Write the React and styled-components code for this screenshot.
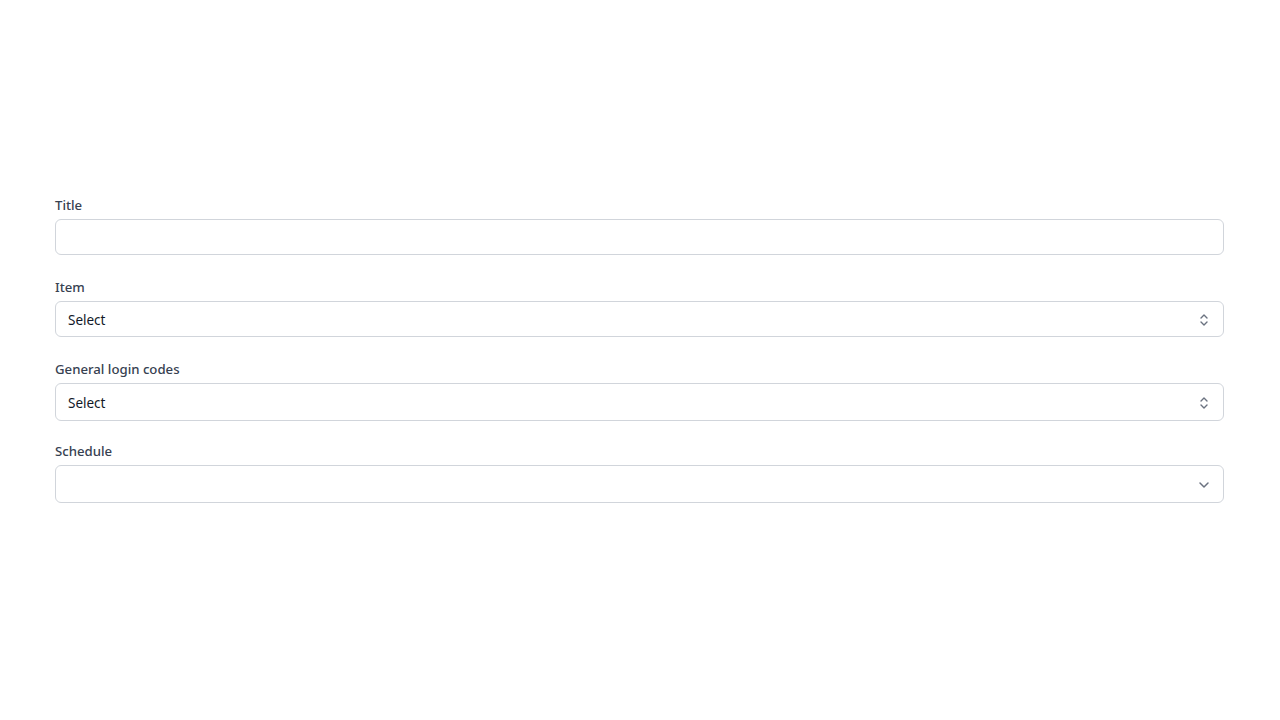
import React from 'react'
import styled, { createGlobalStyle } from 'styled-components'

const GlobalStyle = createGlobalStyle`
  body {
    margin: 0;
    background: #fff;
    font-family: "Noto Sans", "Open Sans", Arial, sans-serif;
  }
`

const Page = styled.div`
  padding: 195px 56px 0 55px;
`

const Form = styled.form`
  display: grid;
  grid-auto-rows: 82px;
  align-content: start;
`

const Field = styled.div`
  display: flex;
  flex-direction: column;
  gap: 4px;
`

const Label = styled.label`
  font-size: 13.2px;
  line-height: 20px;
  font-weight: 500;
  color: #374151;
`

const Control = styled.div`
  box-sizing: border-box;
  height: ${p => p.$h || 36}px;
  border: 1px solid #d1d5db;
  border-radius: 6px;
  background: #fff;
  display: flex;
  align-items: center;
  justify-content: space-between;
  padding: 1px 13px 0 12px;
  font-size: 13.5px;
  color: #111827;
`

const Icon = styled.svg`
  width: 12px;
  height: 16px;
  color: #6b7280;
`

function UpDown() {
  return (
    <Icon viewBox="0 0 12 16" fill="none" stroke="currentColor" strokeWidth="1.4" strokeLinecap="round" strokeLinejoin="round">
      <path d="M3 6l3-3 3 3" />
      <path d="M3 10l3 3 3-3" />
    </Icon>
  )
}

function Down() {
  return (
    <Icon viewBox="0 0 12 16" fill="none" stroke="currentColor" strokeWidth="1.5" strokeLinecap="round" strokeLinejoin="round">
      <path d="M2 6l4 4 4-4" />
    </Icon>
  )
}

export default function App() {
  return (
    <Page>
      <GlobalStyle />
      <Form>
        <Field>
          <Label>Title</Label>
          <Control $h={36} />
        </Field>
        <Field>
          <Label>Item</Label>
          <Control $h={36}>
            <span>Select</span>
            <UpDown />
          </Control>
        </Field>
        <Field>
          <Label>General login codes</Label>
          <Control $h={38}>
            <span>Select</span>
            <UpDown />
          </Control>
        </Field>
        <Field>
          <Label>Schedule</Label>
          <Control $h={38}>
            <span />
            <Down />
          </Control>
        </Field>
      </Form>
    </Page>
  )
}
